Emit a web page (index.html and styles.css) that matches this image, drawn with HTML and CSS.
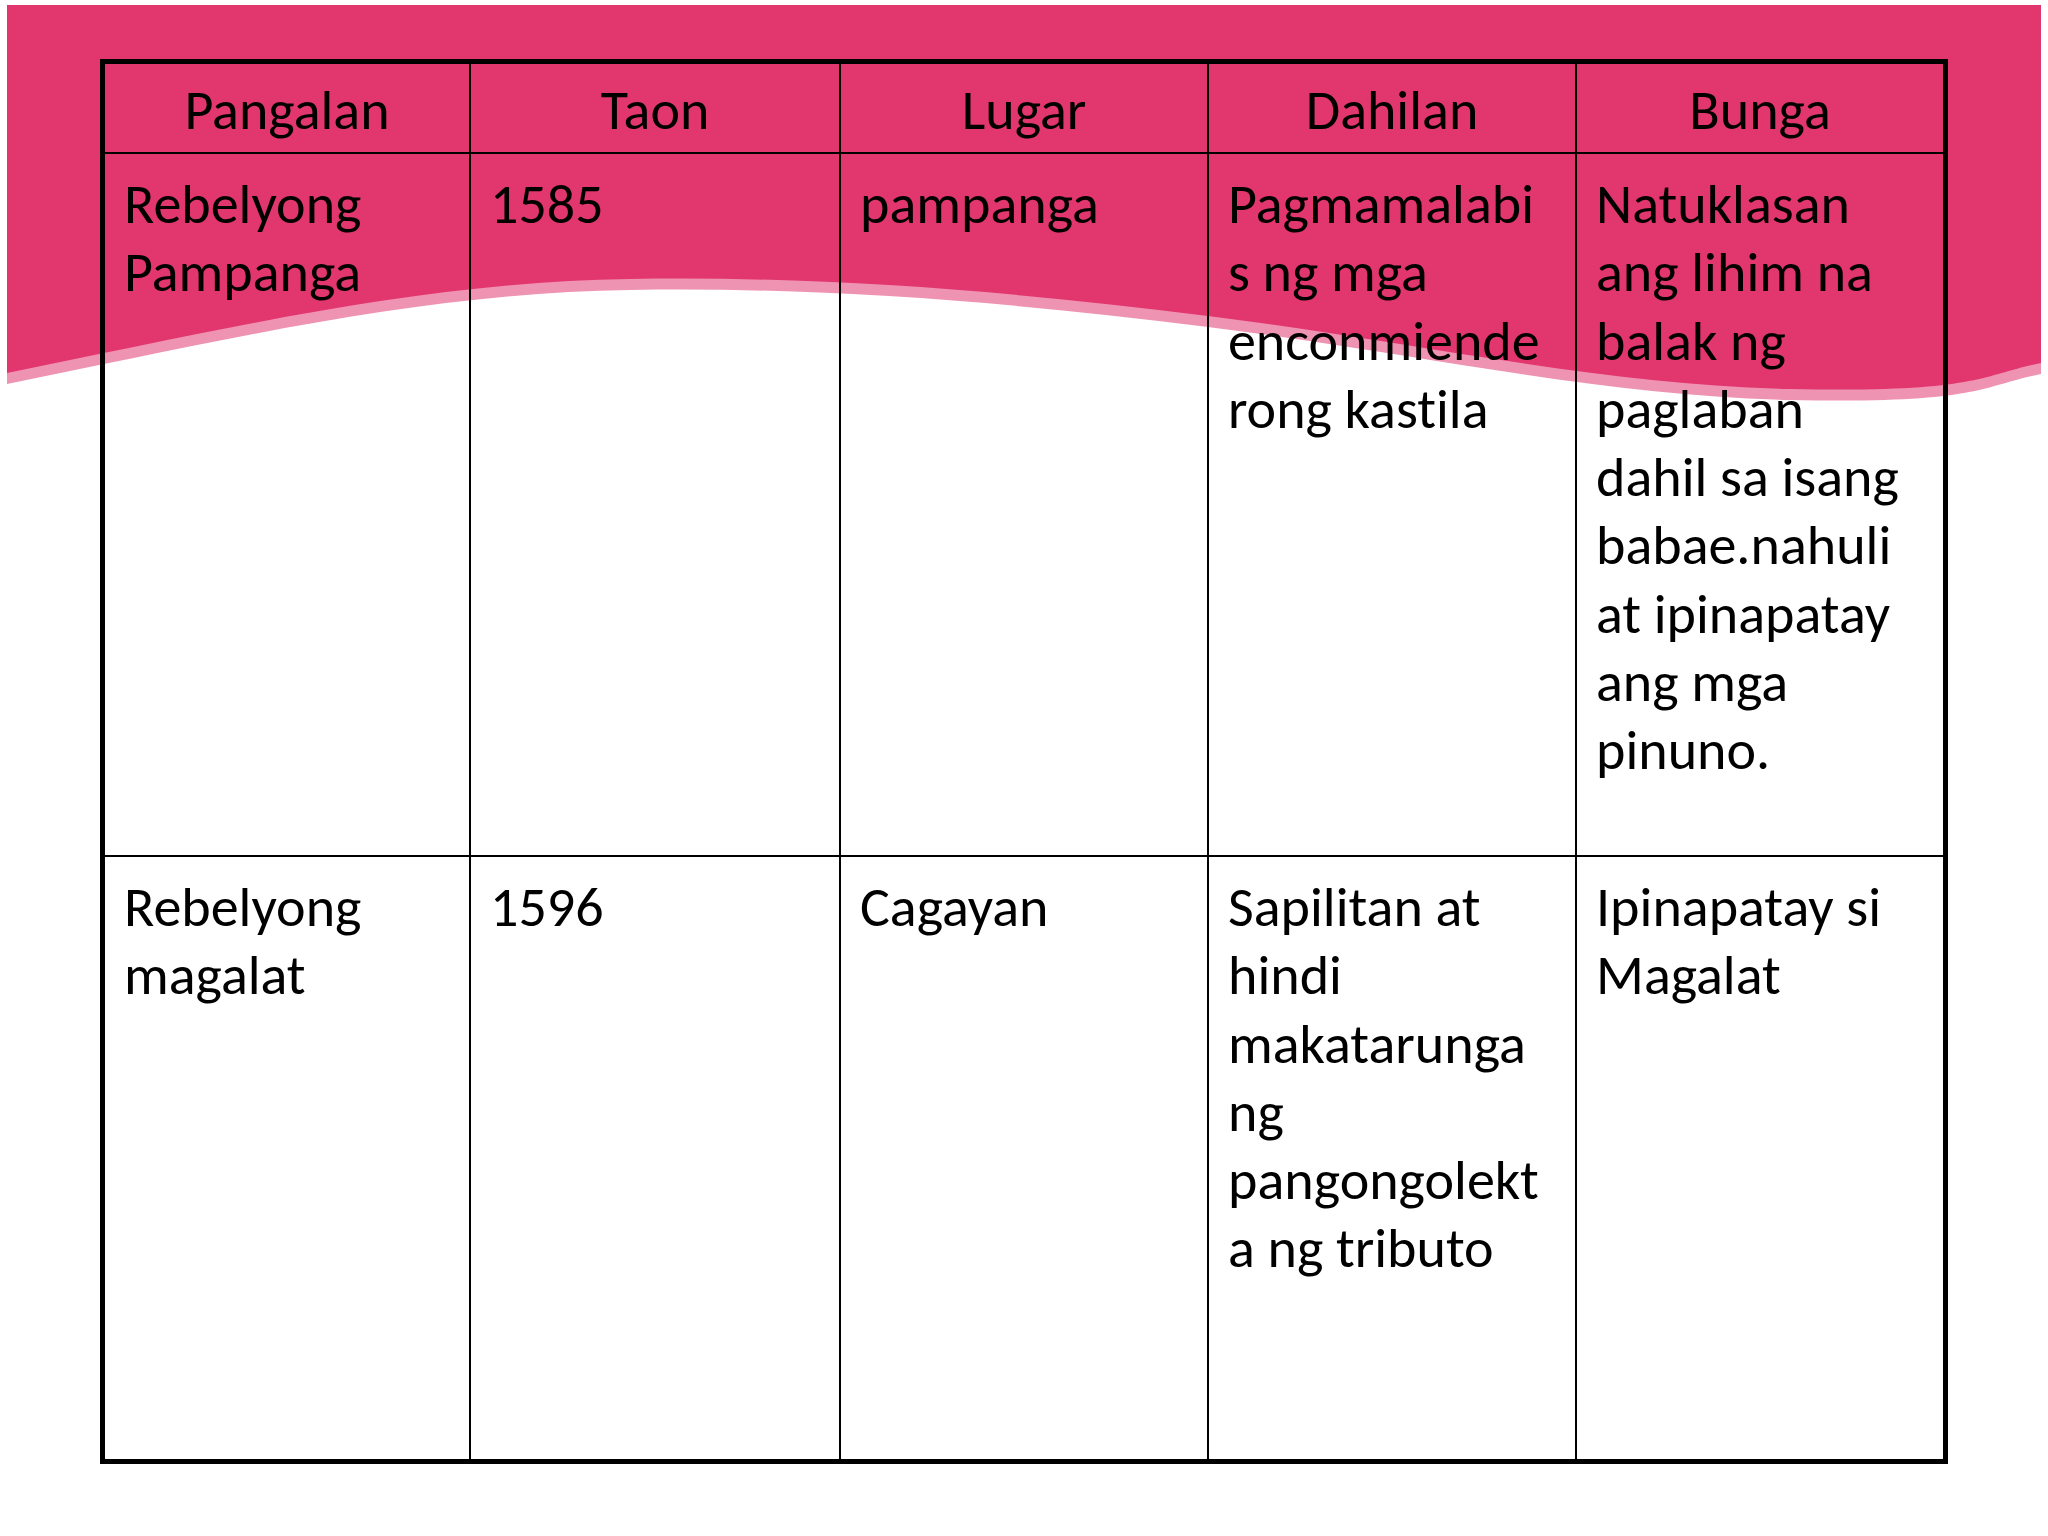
FILE: index.html
```html
<!DOCTYPE html>
<html lang="tl">
<head>
<meta charset="utf-8">
<title>Mga Rebelyon</title>
<link rel="stylesheet" href="styles.css">
</head>
<body>
<div class="slide">
  <svg class="wave" width="2048" height="420" viewBox="0 0 2048 420" aria-hidden="true">
    <path class="wave-band" d="M7,384 C220,341 420,293 630,290 C820,287 1000,301 1208,327 S1600,396 1790,400 S1980,386 2041,374 V5 H7 Z"/>
    <path class="wave-main" d="M7,373 C220,330 420,282 630,279 C820,276 1000,290 1208,316 S1600,385 1790,389 S1980,375 2041,363 V5 H7 Z"/>
  </svg>
  <div class="table">
    <div class="cell head">Pangalan</div>
    <div class="cell head">Taon</div>
    <div class="cell head">Lugar</div>
    <div class="cell head">Dahilan</div>
    <div class="cell head last-col">Bunga</div>

    <div class="cell row1">Rebelyong<br>Pampanga</div>
    <div class="cell row1">1585</div>
    <div class="cell row1">pampanga</div>
    <div class="cell row1">Pagmamalabi<br>s ng mga<br>enconmiende<br>rong kastila</div>
    <div class="cell row1 last-col">Natuklasan<br>ang lihim na<br>balak ng<br>paglaban<br>dahil sa isang<br>babae.nahuli<br>at ipinapatay<br>ang mga<br>pinuno.</div>

    <div class="cell row2 last-row">Rebelyong<br>magalat</div>
    <div class="cell row2 last-row">1596</div>
    <div class="cell row2 last-row">Cagayan</div>
    <div class="cell row2 last-row">Sapilitan at<br>hindi<br>makatarunga<br>ng<br>pangongolekt<br>a ng tributo</div>
    <div class="cell row2 last-row last-col">Ipinapatay si<br>Magalat</div>
  </div>
</div>
</body>
</html>
```
FILE: styles.css
```css
html, body {
  margin: 0;
  padding: 0;
  background: #ffffff;
}

.slide {
  position: relative;
  width: 2048px;
  height: 1536px;
  overflow: hidden;
  background: #ffffff;
  font-family: Carlito, Lato, "Liberation Sans", sans-serif;
  font-variant-ligatures: none;
  color: #000000;
}

.wave {
  position: absolute;
  left: 0;
  top: 0;
  z-index: 0;
}

.wave-main {
  fill: #e2366f;
}

.wave-band {
  fill: #ef93b3;
}

.table {
  position: relative;
  z-index: 1;
  margin: 59px 0 0 100px;
  width: 1848px;
  box-sizing: border-box;
  border: 5px solid #000000;
  display: grid;
  grid-template-columns: 366px 370px 368px 368px 366px;
  grid-template-rows: 90px 703px 602px;
}

.cell {
  box-sizing: border-box;
  border-right: 2px solid #000000;
  border-bottom: 2px solid #000000;
  padding: 16px 10px 0 19px;
  font-size: 56px;
  line-height: 68.3px;
  white-space: nowrap;
}

.head {
  text-align: center;
  padding: 12px 0 0 0;
}

.last-col {
  border-right: none;
}

.last-row {
  border-bottom: none;
}
```
